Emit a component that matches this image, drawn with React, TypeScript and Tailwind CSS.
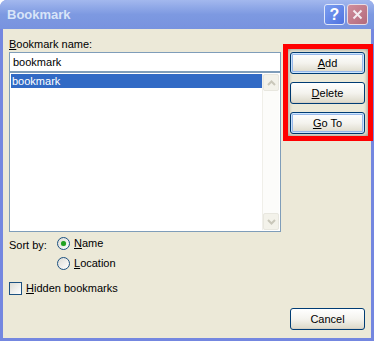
import React from "react";

const font = { fontFamily: '"Liberation Sans", Arial, sans-serif' };

function XpButton({ label, mnemonic, focused }: { label: string; mnemonic?: number; focused?: boolean }) {
  const idx = mnemonic ?? -1;
  return (
    <button
      className={
        "h-[22px] w-[75px] rounded-[3px] border border-[#003c74] bg-gradient-to-b from-[#ffffff] via-[#f4f3ee] to-[#dcd8c8] text-[11px] text-black leading-none " +
        (focused ? "shadow-[inset_0_0_0_1px_#cee7ff,inset_0_0_0_2px_#98b8ea]" : "shadow-[inset_0_-1px_0_#d6d0c5]")
      }
    >
      {idx >= 0 ? (
        <>
          {label.slice(0, idx)}
          <span className="underline">{label[idx]}</span>
          {label.slice(idx + 1)}
        </>
      ) : (
        label
      )}
    </button>
  );
}

function Mn({ text }: { text: string }) {
  return (
    <>
      <span className="underline">{text[0]}</span>
      {text.slice(1)}
    </>
  );
}

function Radio({ checked }: { checked?: boolean }) {
  return (
    <span className="flex h-[13px] w-[13px] items-center justify-center rounded-full border border-[#1c5180] bg-gradient-to-br from-[#dcdcd6] to-[#ffffff]">
      {checked && <span className="h-[5px] w-[5px] rounded-full bg-[#21a121] shadow-[0_0_1px_#7fd07f]" />}
    </span>
  );
}

function ScrollBtn({ up }: { up?: boolean }) {
  return (
    <div className="flex h-[17px] w-[16px] items-center justify-center rounded-[2px] border border-[#e8e7df] bg-[#f3f2ea]">
      <svg width="9" height="6" viewBox="0 0 9 6">
        <path d={up ? "M1 5 L4.5 1.5 L8 5" : "M1 1 L4.5 4.5 L8 1"} stroke="#c9c7ba" strokeWidth="2" fill="none" />
      </svg>
    </div>
  );
}

export default function App() {
  return (
    <div className="relative h-[341px] w-[374px] overflow-hidden bg-white" style={font}>
      <div className="flex h-[341px] w-[374px] flex-col overflow-hidden rounded-t-[7px] bg-[#7487e0]">
        {/* title bar */}
        <div className="flex h-[29px] shrink-0 items-center justify-between bg-gradient-to-b from-[#a3b8ee] via-[#7d99e1] to-[#7893df] pl-[7px] pr-[6px]">
          <span className="text-[13px] font-bold text-[#d8e4f8]">Bookmark</span>
          <div className="flex gap-[2px]">
            <div className="flex h-[21px] w-[21px] items-center justify-center rounded-[3px] border border-[#e0e8fa] bg-gradient-to-br from-[#7c9ef0] to-[#4f72e0] text-[16px] font-bold text-white">
              ?
            </div>
            <div className="flex h-[21px] w-[21px] items-center justify-center rounded-[3px] border border-[#e8dce4] bg-gradient-to-br from-[#d08e9c] to-[#b36a7c]">
              <svg width="11" height="11" viewBox="0 0 11 11">
                <path d="M1.5 1.5 L9.5 9.5 M9.5 1.5 L1.5 9.5" stroke="#f4ecf0" strokeWidth="2" />
              </svg>
            </div>
          </div>
        </div>
        {/* body */}
        <div className="mx-[3px] mb-[3px] flex flex-1 bg-[#ece9d8] text-[11px] text-black">
          <div className="ml-[6px] flex w-[272px] flex-col pt-[7px]">
            <div className="h-[16px]">
              <Mn text="Bookmark name:" />
            </div>
            <div className="flex h-[20px] items-center border border-[#7f9db9] bg-white pl-[3px]">bookmark</div>
            <div className="flex h-[160px] border border-[#7f9db9] bg-white p-[1px]">
              <div className="flex-1">
                <div className="flex h-[14px] items-center bg-[#316ac5] pl-[1px] text-white">bookmark</div>
              </div>
              <div className="flex w-[17px] flex-col justify-between border-l border-[#f0efe9] bg-[#fcfcfa]">
                <ScrollBtn up />
                <ScrollBtn />
              </div>
            </div>
            <div className="mt-[4px] flex">
              <span className="w-[48px] pt-[1px]">Sort by:</span>
              <div className="flex flex-col gap-[6px]">
                <div className="flex h-[14px] items-center gap-[4px]">
                  <Radio checked />
                  <span>
                    <Mn text="Name" />
                  </span>
                </div>
                <div className="flex h-[14px] items-center gap-[4px]">
                  <Radio />
                  <span>
                    <Mn text="Location" />
                  </span>
                </div>
              </div>
            </div>
            <div className="mt-[11px] flex h-[14px] items-center gap-[4px]">
              <span className="h-[13px] w-[13px] border border-[#1c5180] bg-gradient-to-br from-[#dcdcd6] to-[#ffffff]" />
              <span>
                <Mn text="Hidden bookmarks" />
              </span>
            </div>
          </div>
          <div className="ml-[9px] flex flex-col justify-between pb-[8px] pt-[23px]">
            <div className="flex flex-col gap-[8px]">
              <XpButton label="Add" mnemonic={0} focused />
              <XpButton label="Delete" mnemonic={0} />
              <XpButton label="Go To" mnemonic={0} focused />
            </div>
            <XpButton label="Cancel" />
          </div>
        </div>
      </div>
      {/* annotation highlight */}
      <div className="absolute left-[283px] top-[44px] h-[97px] w-[90px] border-[5px] border-[#ff0000] shadow-[inset_0_0_4px_rgba(0,0,0,0.45)]" />
    </div>
  );
}
